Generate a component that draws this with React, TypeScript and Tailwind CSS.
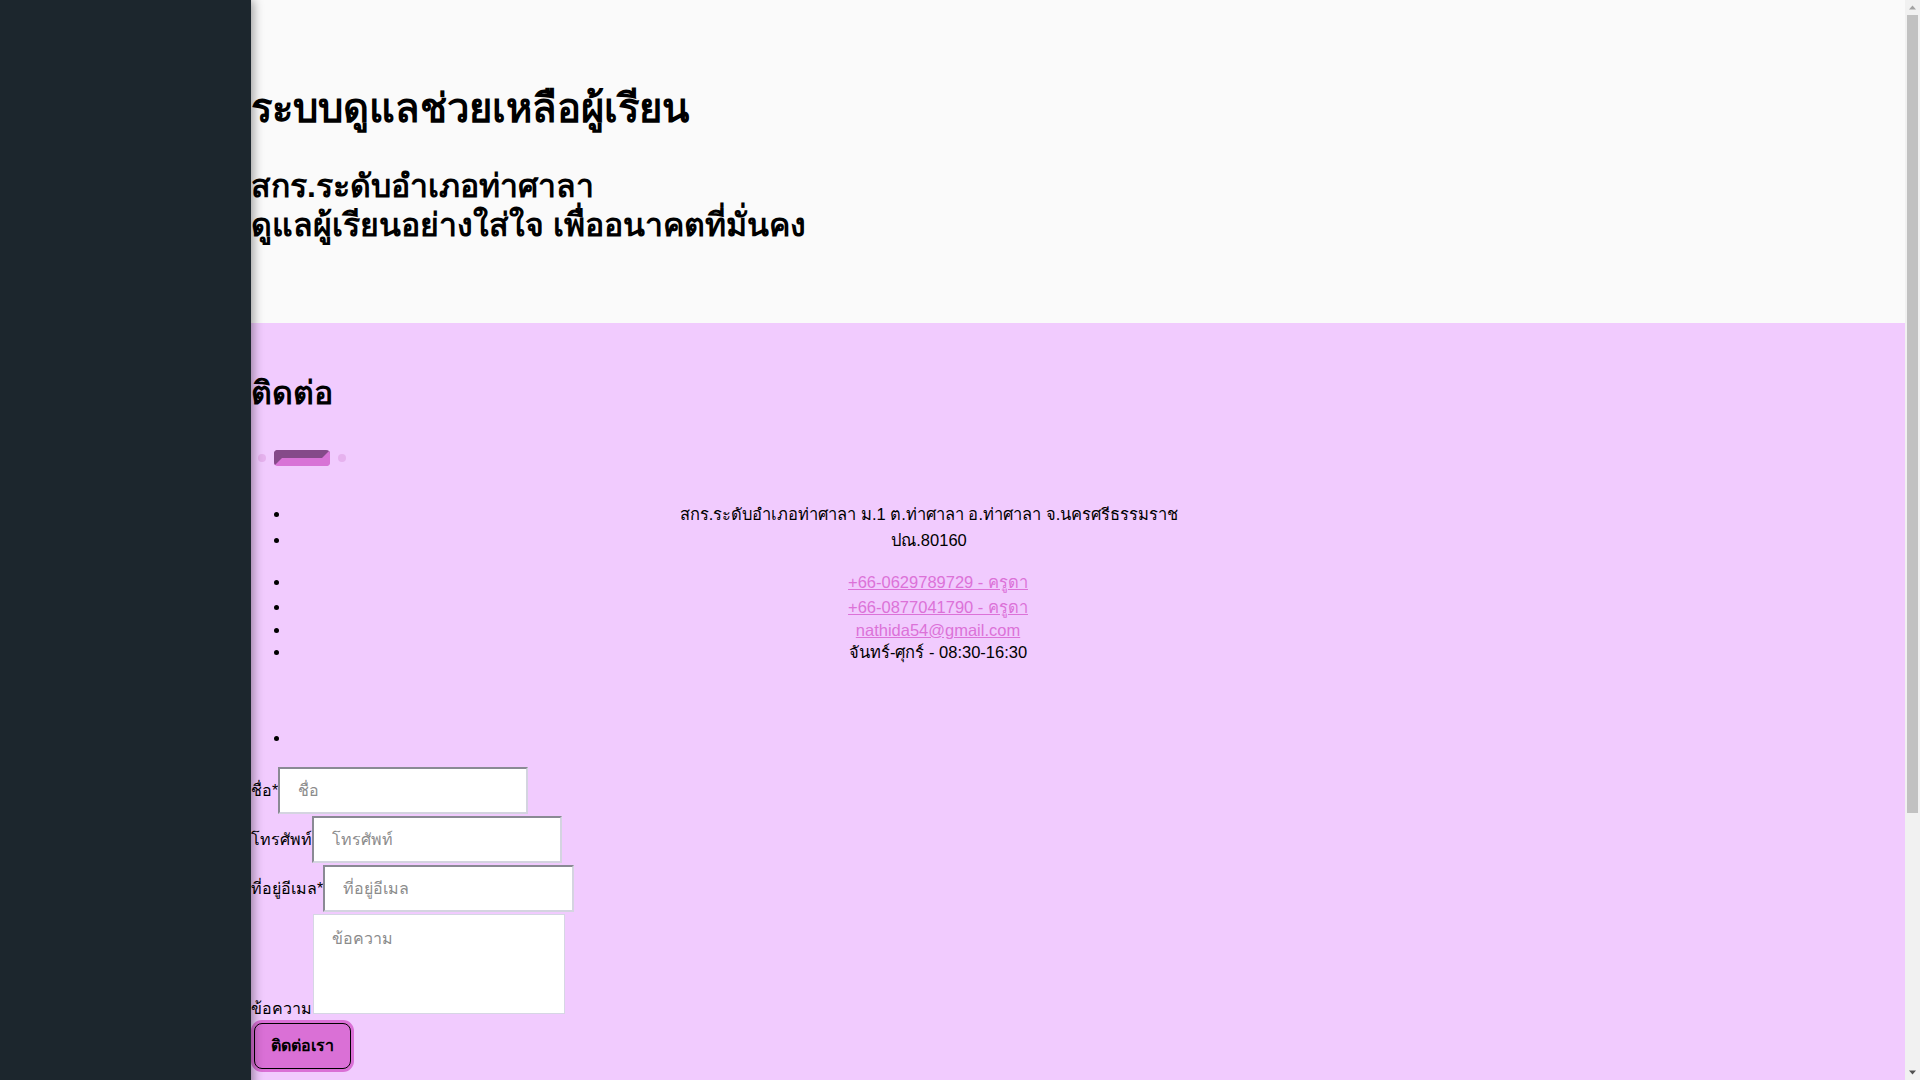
import React from 'react'

const inputCls =
  'h-[47px] border-2 border-t-[#8a8a94] border-l-[#8a8a94] border-r-[#d4d4e0] border-b-[#d4d4e0] bg-white px-[18px] text-[16px] placeholder:text-[#8c8c8c] outline-none'

export default function App() {
  return (
    <div className="flex min-h-screen font-['Liberation_Sans',sans-serif] text-black">
      {/* sidebar */}
      <aside className="relative z-10 w-[251px] shrink-0 bg-[#1c262d] shadow-[2px_0_10px_rgba(0,0,0,0.4)]" />

      <main className="flex-1">
        <section className="bg-[#fafafa] pt-[84px] pb-[78px]">
          <h1 className="text-[40px] leading-[48px] font-bold">ระบบดูแลช่วยเหลือผู้เรียน</h1>
          <h2 className="mt-[35px] text-[32px] leading-[39px] font-bold">
            สกร.ระดับอำเภอท่าศาลา
            <br />
            ดูแลผู้เรียนอย่างใส่ใจ เพื่ออนาคตที่มั่นคง
          </h2>
        </section>

        <section className="bg-[#f1cbfe] pt-[51px] pb-[355px]">
          <h2 className="text-[32px] leading-[38px] font-bold">ติดต่อ</h2>

          {/* slider dots */}
          <div className="mt-[38px] flex h-4 items-center gap-2 pl-[7px]">
            <span className="h-2 w-2 rounded-full bg-[#e6b2ee]" />
            <span className="h-4 w-14 rounded border-[8px] border-t-[#854a89] border-l-[#854a89] border-r-[#d873d6] border-b-[#d873d6]" />
            <span className="h-2 w-2 rounded-full bg-[#e6b2ee]" />
          </div>

          <ul className="mt-[35px] w-[1334px] list-disc pl-10 text-[16.5px]">
            <li className="pr-[18px] text-center leading-[26px]">
              สกร.ระดับอำเภอท่าศาลา ม.1 ต.ท่าศาลา อ.ท่าศาลา จ.นครศรีธรรมราช
            </li>
            <li className="pr-[18px] text-center leading-[26px]">ปณ.80160</li>
            <li className="mt-[17px] text-center leading-[25px]">
              <a href="#" className="text-[#dc72d8] underline">+66-0629789729 - ครูดา</a>
            </li>
            <li className="text-center leading-[24px]">
              <a href="#" className="text-[#dc72d8] underline">+66-0877041790 - ครูดา</a>
            </li>
            <li className="text-center leading-[22px]">
              <a href="#" className="text-[#dc72d8] underline">nathida54@gmail.com</a>
            </li>
            <li className="text-center leading-[23px]">จันทร์-ศุกร์ - 08:30-16:30</li>
            <li className="mt-[63px] text-center leading-[23px]">&nbsp;</li>
          </ul>

          <form className="mt-[17px] flex flex-col gap-[2px] text-[16px]">
            <div className="flex items-center">
              <label>ชื่อ*</label>
              <input placeholder="ชื่อ" className={inputCls + ' w-[250px]'} />
            </div>
            <div className="flex items-center">
              <label>โทรศัพท์</label>
              <input placeholder="โทรศัพท์" className={inputCls + ' w-[250px]'} />
            </div>
            <div className="flex items-center">
              <label>ที่อยู่อีเมล*</label>
              <input placeholder="ที่อยู่อีเมล" className={inputCls + ' w-[251px]'} />
            </div>
            <div className="flex items-end">
              <label className="translate-y-[7px] leading-6">ข้อความ</label>
              <textarea
                placeholder="ข้อความ"
                className="ml-[1px] h-[100px] w-[252px] resize-none border border-[#d6d6e4] bg-white px-[18px] pt-3 text-[16px] placeholder:text-[#8c8c8c] outline-none"
              />
            </div>
            <div className="mt-[7px]">
              <button
                type="button"
                className="ml-[3px] h-[46px] w-[97px] rounded-lg border border-black bg-[#da70d6] text-[16px] font-bold shadow-[0_0_0_3px_#da70d6]"
              >
                ติดต่อเรา
              </button>
            </div>
          </form>
        </section>
      </main>

      {/* window scrollbar */}
      <div className="w-[15px] shrink-0 bg-[#f1f1f1]">
        <div className="sticky top-0 flex h-screen flex-col items-center">
          <svg width="15" height="15" viewBox="0 0 15 15" className="shrink-0">
            <path d="M4 9.5 L7.5 5.5 L11 9.5 Z" fill="#a3a3a3" />
          </svg>
          <div className="h-[798px] w-[11px] bg-[#c1c1c1]" />
          <div className="flex-1" />
          <svg width="15" height="15" viewBox="0 0 15 15" className="shrink-0">
            <path d="M4 5.5 L7.5 9.5 L11 5.5 Z" fill="#505050" />
          </svg>
        </div>
      </div>
    </div>
  )
}
